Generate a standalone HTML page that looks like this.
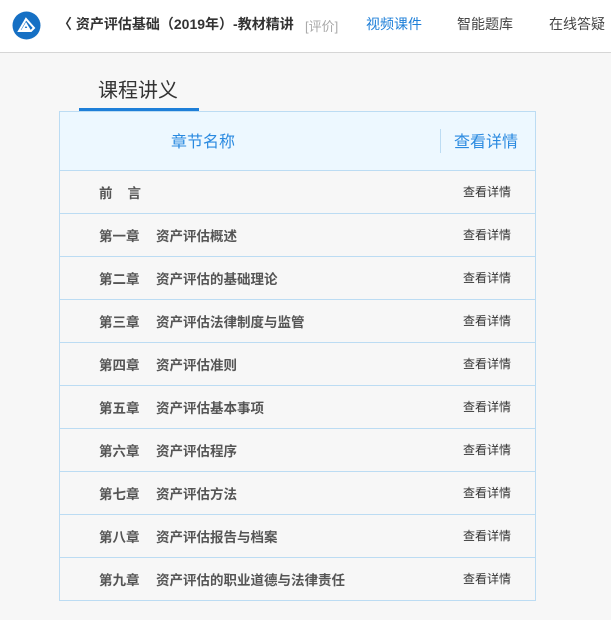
<!DOCTYPE html>
<html><head><meta charset="utf-8"><style>
*{margin:0;padding:0;box-sizing:border-box}
body{width:611px;height:620px;overflow:hidden;background:#f7f7f7;font-family:"Liberation Sans","Noto Sans CJK SC",sans-serif;position:relative}
.hd{position:absolute;left:0;top:0;width:611px;height:53px;background:#fff;border-bottom:1px solid #d6d6d6}
.hd span{position:absolute;top:14px;font-size:14px;white-space:nowrap}
.tab{position:absolute;left:98px;top:74px;font-size:20px;color:#333}
.ul{position:absolute;left:79px;top:108px;width:120px;height:3px;background:#1e7fd8}
.tb{position:absolute;left:59px;top:111px;width:477px;border:1px solid #bcdcf3;border-bottom:none}
.th{height:59px;background:#edf8ff;border-bottom:1px solid #bcdcf3;position:relative}
.th span{position:absolute;top:16px;font-size:16px;color:#2a8ae0}
.th i{position:absolute;left:380px;top:17px;width:1px;height:24px;background:#bcdcf3}
.r{height:43px;border-bottom:1px solid #bcdcf3;position:relative}
.r b{position:absolute;left:39px;top:11px;font-size:13.5px;color:#555;white-space:pre}
.r b+b{left:96px}
.r span{position:absolute;left:403px;top:12px;font-size:12px;color:#333}
</style></head><body>
<div class="hd">
<svg style="position:absolute;left:12px;top:11px" width="29" height="29" viewBox="0 0 29 29"><circle cx="14.5" cy="14.5" r="14" fill="#1670c4"/><path d="M7 20 L14 8 L22 17 L19 20 Z M11 18 L14 13 L17 18 Z" fill="none" stroke="#fff" stroke-width="2"/></svg>
<span style="left:58px;color:#333;font-weight:bold">〈 资产评估基础（2019年）-教材精讲</span>
<span style="left:305px;top:16px;font-size:13px;color:#aaa">[评价]</span>
<span style="left:366px;color:#1e7fd8">视频课件</span>
<span style="left:457px;color:#444">智能题库</span>
<span style="left:549px;color:#444">在线答疑</span>
</div>
<div class="tab">课程讲义</div>
<div class="ul"></div>
<div class="tb">
<div class="th"><span style="left:111px">章节名称</span><i></i><span style="left:394px">查看详情</span></div>
<div class="r"><b>前    言</b><span>查看详情</span></div>
<div class="r"><b>第一章</b><b>资产评估概述</b><span>查看详情</span></div>
<div class="r"><b>第二章</b><b>资产评估的基础理论</b><span>查看详情</span></div>
<div class="r"><b>第三章</b><b>资产评估法律制度与监管</b><span>查看详情</span></div>
<div class="r"><b>第四章</b><b>资产评估准则</b><span>查看详情</span></div>
<div class="r"><b>第五章</b><b>资产评估基本事项</b><span>查看详情</span></div>
<div class="r"><b>第六章</b><b>资产评估程序</b><span>查看详情</span></div>
<div class="r"><b>第七章</b><b>资产评估方法</b><span>查看详情</span></div>
<div class="r"><b>第八章</b><b>资产评估报告与档案</b><span>查看详情</span></div>
<div class="r"><b>第九章</b><b>资产评估的职业道德与法律责任</b><span>查看详情</span></div>
</div>
</body></html>
